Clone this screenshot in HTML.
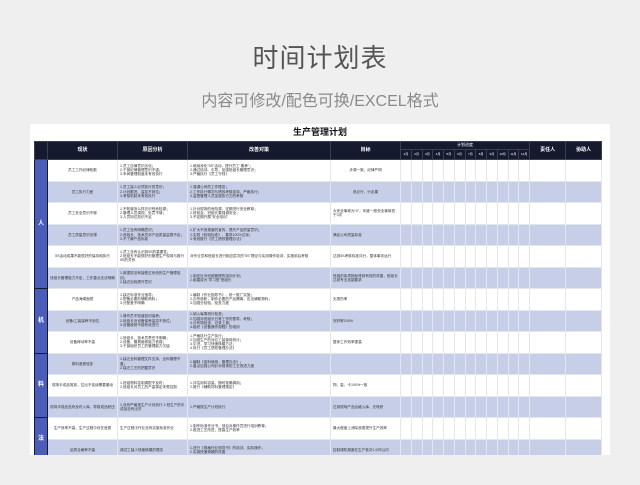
<!DOCTYPE html>
<html><head><meta charset="utf-8"><style>
*{margin:0;padding:0;box-sizing:border-box}
body{width:640px;height:485px;background:#efefef;font-family:"Liberation Sans","Noto Sans CJK SC",sans-serif;position:relative;overflow:hidden}
.t1{position:absolute;top:38px;left:0;width:640px;text-align:center;font-size:26px;color:#555;letter-spacing:1px}
.t2{position:absolute;top:87px;left:0;width:640px;text-align:center;font-size:16px;color:#8a8a8a}
.card{position:absolute;left:30px;top:124px;width:580px;height:331px;background:#fff;overflow:hidden}
.ct{position:absolute;left:0;top:1px;width:580px;text-align:center;font-size:9px;font-weight:bold;color:#111}
table{position:absolute;left:4px;top:17px;border-collapse:collapse;table-layout:fixed;width:567px}
td,th{border:1px solid #e4e6ee;font-size:3.6px;line-height:4.2px;color:#333;overflow:hidden;padding:0 2px;vertical-align:middle}
th{background:#151a2e;color:#fff;font-size:5px;border-color:#3a3f55;font-weight:bold;text-align:center}
th.m{font-size:3px;font-weight:normal;padding:0}
tr.b td{background:#c7cfe8}
tr td.c{text-align:center}
tr td.cat,tr.b td.cat{background:#4a5db8;color:#fff;font-size:6px;font-weight:bold;text-align:center;border:1px solid #151a2e;padding:0}
tbody tr{height:21.5px}
</style></head><body>
<div class="t1">时间计划表</div>
<div class="t2">内容可修改/配色可换/EXCEL格式</div>
<div class="card"><div class="ct">生产管理计划</div>
<table>
<colgroup><col style="width:13px"><col style="width:70px"><col style="width:70px"><col style="width:143px"><col style="width:70px">
<col span="12" style="width:10.75px"><col style="width:36px"><col style="width:36px"></colgroup>
<thead><tr style="height:8px"><th rowspan="2"></th><th rowspan="2">现状</th><th rowspan="2">原因分析</th><th rowspan="2">改善对策</th><th rowspan="2">目标</th><th colspan="12" class="m" style="font-size:4px">计划进度</th><th rowspan="2">责任人</th><th rowspan="2">协助人</th></tr>
<tr style="height:10px"><th class="m">1月</th><th class="m">2月</th><th class="m">3月</th><th class="m">4月</th><th class="m">5月</th><th class="m">6月</th><th class="m">7月</th><th class="m">8月</th><th class="m">9月</th><th class="m">10月</th><th class="m">11月</th><th class="m">12月</th></tr></thead>
<tbody>
<tr><td class="cat" rowspan="6">人</td><td class="c">员工工作纪律松散</td><td>1.员工自律意识淡化；<br>2.干部纪律管理意识不强；<br>3.车间管理制度未有效执行</td><td>1.继续深化"5S"活动，提升员工"素养"；<br>2.通过培训、引导，加强班组长管理意识；<br>3.严格执行《员工守则》</td><td class="c">步调一致，纪律严明</td><td></td><td></td><td></td><td></td><td></td><td></td><td></td><td></td><td></td><td></td><td></td><td></td><td></td><td></td></tr>
<tr class="b"><td class="c">员工执行力差</td><td>1.员工缺少必须执行的意识；<br>2.计划跟进、监控不到位；<br>3.考核机制未有效执行</td><td>1.强调公司的工作理念；<br>2.工作执行情况与绩效考核挂钩，严格执行；<br>3.监督管理人员加强执行力的考核</td><td class="c">说必行，行必果</td><td></td><td></td><td></td><td></td><td></td><td></td><td></td><td></td><td></td><td></td><td></td><td></td><td></td><td></td></tr>
<tr><td class="c">员工安全意识不够</td><td>1.不知道怎么样去识别危险源；<br>2.管理人员漠视，处罚不够；<br>3.人员岗位知识不足</td><td>1.针对现场的危险源，定期进行安全教育；<br>2.班前会，班组长要强调安全；<br>3.不定期开展"安全培训"</td><td>大安全事故为"0"，年度一般安全事故低于3次</td><td></td><td></td><td></td><td></td><td></td><td></td><td></td><td></td><td></td><td></td><td></td><td></td><td></td><td></td></tr>
<tr class="b"><td class="c">员工质量意识淡薄</td><td>1.员工没有明确意识；<br>2.班组长、技术员对产品质量监督不足；<br>3.不了解产品标准</td><td>1.扩大不良报废的宣传，提升产品质量意识；<br>2.实现《检验标准》，要求100%达标；<br>3.有效推行《员工绩效管理办法》</td><td>满足公司质量标准</td><td></td><td></td><td></td><td></td><td></td><td></td><td></td><td></td><td></td><td></td><td></td><td></td><td></td><td></td></tr>
<tr><td class="c">5S活动成果不能很好的保持和执行</td><td>1.员工没有认识到5S的重要性；<br>2.班组长不能很好的管理生产现场与推行5S的关系</td><td>对作业员和班组长进行相应层次的"5S"理论与实用操作培训，实施前后考核</td><td>达到5S考核标准评分，整体事务运行</td><td></td><td></td><td></td><td></td><td></td><td></td><td></td><td></td><td></td><td></td><td></td><td></td><td></td><td></td></tr>
<tr class="b"><td class="c">班组长管理能力不足，工作重点无法明确</td><td>1.新提拔没有接受过系统的生产管理培训；<br>2.缺乏自我提升意识</td><td>1.制定针对班组管理的培训计划；<br>2.组建成为"学习型"班组长</td><td>班组的各项指标得到有效的改善，班组长达到专业技能要求</td><td></td><td></td><td></td><td></td><td></td><td></td><td></td><td></td><td></td><td></td><td></td><td></td><td></td><td></td></tr>
<tr><td class="cat" rowspan="3">机</td><td class="c">产品海绵面损</td><td>1.缺乏标准作业指导；<br>2.配备必要的辅助物料；<br>3.分配差不明确</td><td>1.编制《作业指导书》，统一推广实施；<br>2.办所造粉，制作必要的产品隔离，压出辅助物料；<br>3.加强分检验，检查力度</td><td>无损伤率</td><td></td><td></td><td></td><td></td><td></td><td></td><td></td><td></td><td></td><td></td><td></td><td></td><td></td><td></td></tr>
<tr class="b"><td class="c">设备/工装保养不到位</td><td>1.操作员不知道如何保养；<br>2.班组长对设备保养监控不到位；<br>3.设备维修不能有效进行</td><td>1.纳入每周例行检查；<br>2.加强对班组长日常工作的督导、考核；<br>3.分布周检查，记录上报；<br>4.组织《设备操作规程》的培训</td><td>完好率100%</td><td></td><td></td><td></td><td></td><td></td><td></td><td></td><td></td><td></td><td></td><td></td><td></td><td></td><td></td></tr>
<tr><td class="c">设备稼动率不高</td><td>1.班组长、技术员责任不明确；<br>2.设备、模具维修能力低弱；<br>3.干部组织员工的管理能力欠缺</td><td>1.严格执行生产执行；<br>2.加强生产的对应工装使用统计；<br>3.引进，学习快速换模方法；<br>4.执行《员工绩效管理办法》</td><td>整体工作效率提高</td><td></td><td></td><td></td><td></td><td></td><td></td><td></td><td></td><td></td><td></td><td></td><td></td><td></td><td></td></tr>
<tr class="b"><td class="cat" rowspan="3">料</td><td class="c">原料浪费较多</td><td>1.缺乏全料管理文件支持，全料管理不善；<br>2.缺乏工艺的把握意识</td><td>1.编制《金料使用，管理办法》；<br>2.重点加强公司针对现场的工艺改进力度</td><td></td><td></td><td></td><td></td><td></td><td></td><td></td><td></td><td></td><td></td><td></td><td></td><td></td><td></td><td></td></tr>
<tr><td class="c">现场半成品堆放，拉出不连续需要搬动</td><td>1.班组物料控制调配不及时；<br>2.班组长对员工的产量核定未受控制</td><td>1.评估用料容量，随时准确调用；<br>2.推行《辅助材料管理规定》</td><td>物、量、卡100%一致</td><td></td><td></td><td></td><td></td><td></td><td></td><td></td><td></td><td></td><td></td><td></td><td></td><td></td><td></td></tr>
<tr class="b"><td class="c">现场半成品没有及时入库，导致成品积压</td><td>1.没有严格按生产计划执行 2.班生产的半成品没有出货</td><td>1.严格按生产计划执行</td><td>达到现场产品合格入库，无堆积</td><td></td><td></td><td></td><td></td><td></td><td></td><td></td><td></td><td></td><td></td><td></td><td></td><td></td><td></td></tr>
<tr><td class="cat" rowspan="2">法</td><td class="c">生产效率不高，生产过程中存在浪费</td><td>生产过程中作业没有实施标准作业</td><td>1.制作标准作业书，然后对操作员进行培训教育；<br>2.推进工艺改进，提高生产效率</td><td>最大程度上消除浪费提升生产效率</td><td></td><td></td><td></td><td></td><td></td><td></td><td></td><td></td><td></td><td></td><td></td><td></td><td></td><td></td></tr>
<tr class="b"><td class="c">品质合格率不高</td><td>调试工缺少快速换模的理念</td><td>1.进行《规格作业指导书》的培训，实际操作；<br>2.实施快速换模的改善</td><td>控制调机报废在生产批次1小时以内</td><td></td><td></td><td></td><td></td><td></td><td></td><td></td><td></td><td></td><td></td><td></td><td></td><td></td><td></td></tr>
</tbody></table></div>
</body></html>
